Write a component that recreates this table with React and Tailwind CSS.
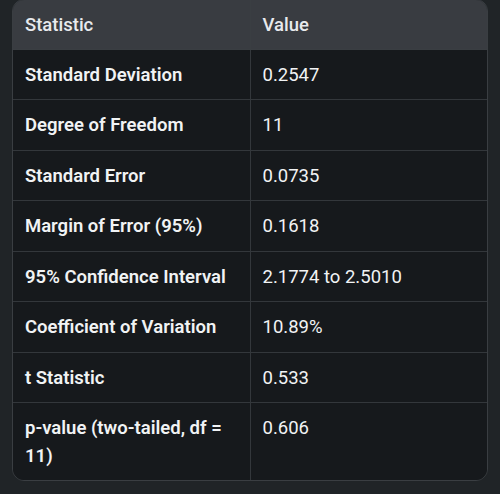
import React from 'react';

const rows = [
  ['Standard Deviation', '0.2547'],
  ['Degree of Freedom', '11'],
  ['Standard Error', '0.0735'],
  ['Margin of Error (95%)', '0.1618'],
  ['95% Confidence Interval', '2.1774 to 2.5010'],
  ['Coefficient of Variation', '10.89%'],
  ['t Statistic', '0.533'],
  ['p-value (two-tailed, df = 11)', '0.606'],
];

export default function App() {
  return (
    <div className="w-[500px] h-[494px] bg-[#202427] px-3 font-['Roboto',sans-serif] overflow-hidden">
      <div className="-mt-px rounded-xl border border-[#3a3e42] overflow-hidden">
        <table className="w-full table-fixed border-collapse text-[18.5px] leading-[27.5px]">
          <thead>
            <tr className="bg-[#393c41] text-[#e8eaed]">
              <th className="w-1/2 h-[49px] px-3 pt-[2px] text-left font-medium border-b border-r border-[#3a3e42]">Statistic</th>
              <th className="w-1/2 h-[49px] px-3 pt-[2px] text-left font-medium border-b border-[#3a3e42]">Value</th>
            </tr>
          </thead>
          <tbody className="bg-[#16191c] text-[#f1f3f4]">
            {rows.map(([label, value], i) => (
              <tr key={label} className={i < rows.length - 1 ? 'border-b border-[#33373b]' : ''}>
                <td className="px-3 pt-[12px] pb-[10px] align-top font-semibold border-r border-[#33373b]">{label}</td>
                <td className="px-3 pt-[12px] pb-[10px] align-top">{value}</td>
              </tr>
            ))}
          </tbody>
        </table>
      </div>
    </div>
  );
}
